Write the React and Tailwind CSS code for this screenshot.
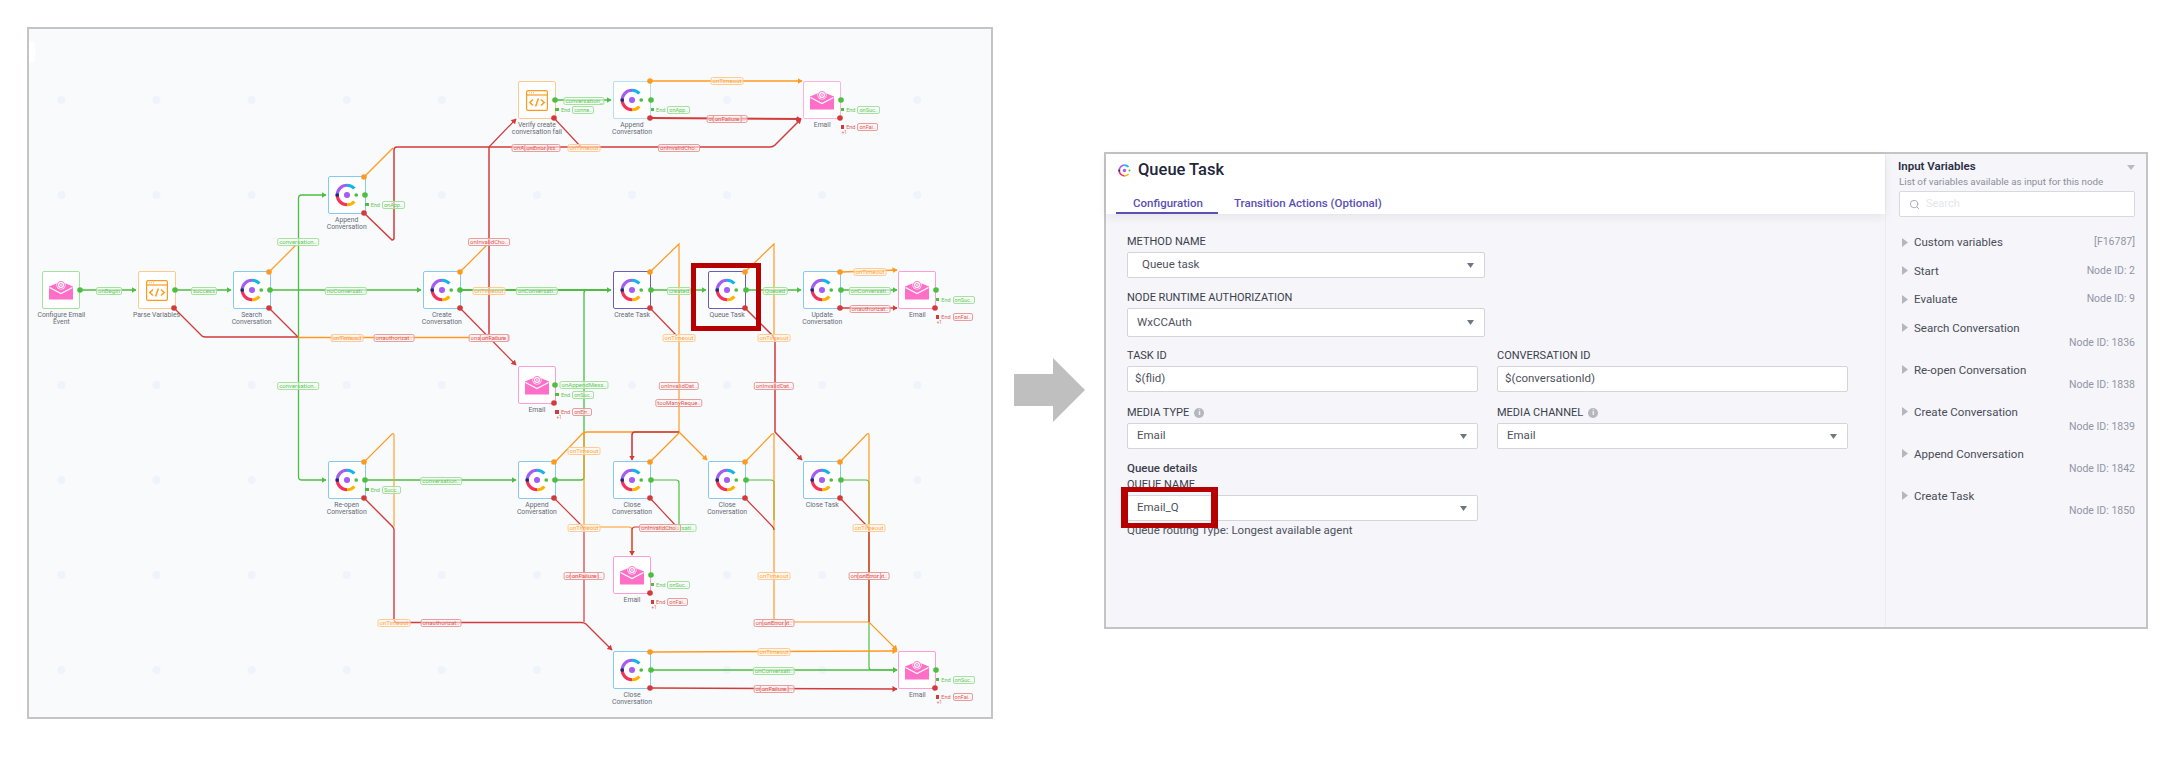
import React from "react";
import { Search } from "lucide-react";

const GREEN = "#4cbf40";
const ORANGE = "#ff9a1f";
const RED = "#d33b3b";

const colX = (k) => 42.4 + 95.1 * k;
const rowY = (j) => 81 + 95 * j;

const nodes = [
  { kind: "mail", k: 0, j: 2, border: "border-[#a3e39c]", label: ["Configure Email", "Event"] },
  { kind: "code", k: 1, j: 2, border: "border-[#ffc98f]", label: ["Parse Variables"] },
  { kind: "logo", k: 2, j: 2, border: "border-[#85c9f7]", label: ["Search", "Conversation"] },
  { kind: "logo", k: 3, j: 1, border: "border-[#85c9f7]", label: ["Append", "Conversation"] },
  { kind: "logo", k: 4, j: 2, border: "border-[#85c9f7]", label: ["Create", "Conversation"] },
  { kind: "code", k: 5, j: 0, border: "border-[#ffc98f]", label: ["Verify create", "conversation fail"] },
  { kind: "logo", k: 6, j: 0, border: "border-[#b5def9]", label: ["Append", "Conversation"] },
  { kind: "mail", k: 8, j: 0, border: "border-[#ffb3e0]", label: ["Email"] },
  { kind: "logo", k: 6, j: 2, border: "border-[#6a5fb8]", thick: true, label: ["Create Task"] },
  { kind: "logo", k: 7, j: 2, border: "border-[#6a5fb8]", thick: true, label: ["Queue Task"] },
  { kind: "logo", k: 8, j: 2, border: "border-[#85c9f7]", label: ["Update", "Conversation"] },
  { kind: "mail", k: 9, j: 2, border: "border-[#ff9dd8]", label: ["Email"] },
  { kind: "mail", k: 5, j: 3, border: "border-[#ff9dd8]", label: ["Email"] },
  { kind: "logo", k: 3, j: 4, border: "border-[#85c9f7]", label: ["Re-open", "Conversation"] },
  { kind: "logo", k: 5, j: 4, border: "border-[#85c9f7]", label: ["Append", "Conversation"] },
  { kind: "logo", k: 6, j: 4, border: "border-[#85c9f7]", label: ["Close", "Conversation"] },
  { kind: "logo", k: 7, j: 4, border: "border-[#85c9f7]", label: ["Close", "Conversation"] },
  { kind: "logo", k: 8, j: 4, border: "border-[#85c9f7]", label: ["Close Task"] },
  { kind: "mail", k: 6, j: 5, border: "border-[#ff9dd8]", label: ["Email"] },
  { kind: "logo", k: 6, j: 6, border: "border-[#85c9f7]", label: ["Close", "Conversation"] },
  { kind: "mail", k: 9, j: 6, border: "border-[#ff9dd8]", label: ["Email"] },
];

// [colour, stroke width, path, has arrow]
const edges = [
  [GREEN, 1.3, "M298.5 290 V198 Q298.5 195 302 195 H326", true],
  [GREEN, 1.3, "M298.5 290 V477 Q298.5 480 302 480 H326", true],
  [GREEN, 1.3, "M80 290 H136", true],
  [GREEN, 1.3, "M175 290 H231", true],
  [GREEN, 1.3, "M270 290 H421", true],
  [GREEN, 2, "M460 290 H611", true],
  [GREEN, 1.3, "M555 100 H611", true],
  [GREEN, 1.5, "M651 290 H706", true],
  [GREEN, 1.5, "M746 290 H801", true],
  [GREEN, 1.3, "M841 290 H897", true],
  [GREEN, 1.5, "M365 480 H516", true],
  [GREEN, 1.3, "M651 670 H897", true],
  [GREEN, 1.3, "M555 480 H581 Q584 480 584 477 V293 Q584 290 587 290", false],
  [GREEN, 1.2, "M651 480 H676 Q679 480 679 483 V527", false],
  [GREEN, 1.2, "M746 480 H771 Q774 480 774 483 V520", false],
  [GREEN, 1.2, "M841 480 H866 Q869 480 869 483 V667 Q869 670 872 670 H897", true],

  [ORANGE, 1.2, "M269 272 L296 245", false],
  [ORANGE, 1.2, "M460 272 L487 245", false],
  [ORANGE, 1.2, "M364 177 L393 148", false],
  [RED, 1.3, "M174 308 L202 336 Q203 337 206 337 H298", false],
  [RED, 1.3, "M269 308 L298 337", false],
  [ORANGE, 1.3, "M298 337.5 H470", false],
  [RED, 1.3, "M460 308 L516 365", true],
  [RED, 1.5, "M489 337 V147", false],
  [RED, 1.2, "M489 147 L516 119", true],
  [RED, 1.5, "M364 213 L392 240 Q394 240 394 238 V150 Q394 147 397 147 H770 Q773 147 775 145 L801 119", true],
  [RED, 1.2, "M554 118 L581 147", false],
  [ORANGE, 1.3, "M650 81 H802", true],
  [RED, 1.8, "M650 118 L801 119", true],
  [ORANGE, 1.3, "M841 272 L897 270", true],
  [RED, 1.3, "M841 308 H897", true],

  [ORANGE, 1.2, "M650 272 L679 244 V432", false],
  [RED, 1.2, "M650 308 L677 336", false],
  [ORANGE, 1.3, "M555 462 L582 434 Q584 432 587 432 H679 L707 460", true],
  [RED, 1.6, "M679 432 H635 Q632 432 632 435 V460", true],
  [ORANGE, 1.2, "M650 462 L679 433", false],
  [ORANGE, 1.2, "M584 432 V527 H629 Q632 527 632 530 V555", true],
  [RED, 1.2, "M650 498 L677 527 H635 Q632 527 632 530 V555", true],
  [RED, 1.2, "M554 498 L582 526 Q584 528 584 530 V622", false],
  [ORANGE, 1.2, "M745 272 L774 244 V336", false],
  [RED, 1.5, "M745 308 L772 335 Q775 338 775 341 V432 L802 460", true],
  [ORANGE, 1.2, "M745 462 L772 434 Q774 433 774 435 V620 Q774 622 778 622 H869 L897 650", true],
  [RED, 1.2, "M745 498 L772 526 Q774 528 774 530", false],
  [ORANGE, 1.2, "M840 462 L867 434 Q869 433 869 435 V622", false],
  [RED, 1.3, "M840 498 L867 526 Q869 528 869 530 V622", false],
  [ORANGE, 1.1, "M364 462 L392 434 Q394 433 394 435 V527", false],
  [RED, 1.4, "M364 498 L392 526 Q394 528 394 530 V619 Q394 622.5 397 622.5 H581 Q584 622.5 586 624 L612 650", true],
  [ORANGE, 1.4, "M650 652 L897 651", true],
  [RED, 1.4, "M650 688 L897 689", true],
];

const ports = [
  [80, 290, GREEN], [175, 290, GREEN], [174, 308, RED],
  [270, 290, GREEN], [269, 272, ORANGE], [269, 308, RED],
  [365, 195, GREEN], [364, 177, ORANGE], [364, 213, RED],
  [460, 290, GREEN], [460, 272, ORANGE], [460, 308, RED],
  [555, 100, GREEN], [554, 118, RED],
  [651, 100, GREEN], [650, 81, ORANGE], [650, 118, RED],
  [841, 100, GREEN], [840, 118, RED],
  [651, 290, GREEN], [650, 272, ORANGE], [650, 308, RED],
  [746, 290, GREEN], [745, 272, ORANGE], [745, 308, RED],
  [841, 290, GREEN], [840, 272, ORANGE], [840, 308, RED],
  [936, 290, GREEN], [935, 308, RED],
  [555, 385, GREEN], [554, 403, RED],
  [365, 480, GREEN], [364, 462, ORANGE], [364, 498, RED],
  [555, 480, GREEN], [554, 462, ORANGE], [554, 498, RED],
  [651, 480, GREEN], [650, 462, ORANGE], [650, 498, RED],
  [746, 480, GREEN], [745, 462, ORANGE], [745, 498, RED],
  [841, 480, GREEN], [840, 462, ORANGE], [840, 498, RED],
  [651, 575, GREEN], [650, 593, RED],
  [651, 670, GREEN], [650, 652, ORANGE], [650, 688, RED],
  [936, 670, GREEN], [935, 688, RED],
];

const pills = [
  ["g", "onBegin", 109, 291], ["g", "success", 204, 291], ["g", "noConversati..", 346, 291],
  ["g", "onConversati..", 537, 291], ["g", "created", 679, 291], ["g", "Queued", 775, 291],
  ["g", "conversation..", 298, 242], ["g", "conversation..", 298, 386], ["g", "conversation_", 584, 100.5],
  ["g", "conversation..", 441, 481], ["g", "onConversati..", 870, 291], ["g", "onAppendMess..", 584, 385],
  ["g", "conversati..", 679, 528], ["g", "onConversati..", 774, 671],
  ["o", "onTimeout", 489, 291], ["o", "onTimeout", 870, 272], ["o", "onTimeout", 584, 148],
  ["o", "onTimeout", 727, 81], ["o", "onTimeout", 679, 338], ["o", "onTimeout", 774, 338],
  ["o", "onTimeout", 584, 451], ["o", "onTimeout", 584, 528], ["o", "onTimeout", 774, 576],
  ["o", "onTimeout", 869, 528], ["o", "onTimeout", 774, 652], ["o", "onTimeout", 394, 623],
  ["r", "onFailure", 346, 338], ["o", "onTimeout", 347, 338], ["r", "onauthorizat..", 394, 338],
  ["r", "onauthorizat..", 489, 338], ["r", "onFailure", 494, 338],
  ["r", "onInvalidCho..", 489, 242], ["r", "onInvalidCho..", 679, 148],
  ["r", "onAppendMess..", 536, 148], ["r", "onError", 536, 148],
  ["r", "onauthorizat..", 727, 119], ["r", "onFailure", 727, 119],
  ["r", "onauthorizat..", 870, 309], ["r", "onInvalidCho..", 660, 528],
  ["r", "onauthorizat..", 584, 576], ["r", "onFailure", 584, 576],
  ["r", "onauthorizat..", 869, 576], ["r", "onError", 869, 576],
  ["r", "onauthorizat..", 774, 623], ["r", "onError", 774, 623],
  ["r", "onInvalidDat..", 679, 386], ["r", "tooManyReque..", 679, 403], ["r", "onInvalidDat..", 774, 386],
  ["r", "onauthorizat..", 441, 623], ["r", "onauthorizat..", 774, 689], ["r", "onFailure", 774, 689],
];

// end markers: [node left, node top, colour, pill text]
const ends = [
  [colX(3), rowY(1), "g", "onApp.."], [colX(5), rowY(0), "g", "conne.."], [colX(6), rowY(0), "g", "onApp.."],
  [colX(8), rowY(0), "g", "onSuc.."], [colX(8), rowY(0), "r", "onFai.."],
  [colX(9), rowY(2), "g", "onSuc.."], [colX(9), rowY(2), "r", "onFai.."],
  [colX(5), rowY(3), "g", "onSuc.."], [colX(5), rowY(3), "r", "onErr.."],
  [colX(3), rowY(4), "g", "Succ.."],
  [colX(6), rowY(5), "g", "onSuc.."], [colX(6), rowY(5), "r", "onFai.."],
  [colX(9), rowY(6), "g", "onSuc.."], [colX(9), rowY(6), "r", "onFai.."],
];

const pillStyles = {
  g: "border-[#a5e29f] text-[#62c857] bg-[#f4fcf3]/60",
  o: "border-[#ffcb95] text-[#ffa640] bg-[#fff6ec]/60",
  r: "border-[#e99d9d] text-[#dc5a5a] bg-[#fdf1f1]/60",
};

const inputVars = [
  { name: "Custom variables", id: "[F16787]" },
  { name: "Start", id: "Node ID: 2" },
  { name: "Evaluate", id: "Node ID: 9" },
  { name: "Search Conversation", id: "Node ID: 1836", wrap: true },
  { name: "Re-open Conversation", id: "Node ID: 1838", wrap: true },
  { name: "Create Conversation", id: "Node ID: 1839", wrap: true },
  { name: "Append Conversation", id: "Node ID: 1842", wrap: true },
  { name: "Create Task", id: "Node ID: 1850", wrap: true },
];

const LogoIcon = ({ size = 24 }) => (
  <svg width={size} height={size} viewBox="0 0 26 26" fill="none" strokeWidth="3.4">
    <path d="M13 2.4 A10.6 10.6 0 0 0 2.4 13" stroke="#a35df5" />
    <path d="M13 2.4 A10.6 10.6 0 0 1 21 6" stroke="#12b5e5" />
    <path d="M2.4 13 A10.6 10.6 0 0 0 13 23.6" stroke="#f5325c" />
    <path d="M13 23.6 A10.6 10.6 0 0 0 21 20" stroke="#ffb300" />
    <circle cx="2.4" cy="13" r="2" fill="#12326e" stroke="none" />
    <circle cx="13" cy="13" r="3.3" fill="#a35df5" stroke="none" />
    <circle cx="23" cy="13" r="2" fill="#4cbf40" stroke="none" />
  </svg>
);

const MailIcon = () => (
  <svg width="24" height="20" viewBox="0 0 24 20">
    <path d="M0 6.5 L12 1.5 L24 6.5 V19 Q24 19.5 23.5 19.5 H.5 Q0 19.5 0 19 Z" fill="#ff6ec7" />
    <path d="M0.5 7.5 L12 13.5 L23.5 7.5" fill="none" stroke="#fff" strokeWidth="1.2" />
    <circle cx="12" cy="5" r="4.6" fill="#fff" />
    <circle cx="12" cy="5" r="3.6" fill="none" stroke="#ff6ec7" strokeWidth=".9" />
    <circle cx="12" cy="5" r="1.4" fill="none" stroke="#ff6ec7" strokeWidth=".9" />
  </svg>
);

const CodeIcon = () => (
  <svg width="22" height="21" viewBox="0 0 22 21" fill="none" stroke="#ff9a1f">
    <rect x=".6" y=".6" width="20.8" height="19.8" rx="1.4" strokeWidth="1.2" />
    <path d="M.6 5 H21.4" strokeWidth="1.2" />
    <path d="M3 2.8 H3.8 M5 2.8 H5.8 M7 2.8 H7.8" strokeWidth="1" />
    <path d="M7 9.5 L3.8 12.5 L7 15.5 M15 9.5 L18.2 12.5 L15 15.5 M12.4 8.6 L9.6 16.4" strokeWidth="1.5" />
  </svg>
);

const Pill = ({ tone, text, x, y }) => (
  <span
    className={`absolute -translate-x-1/2 -translate-y-1/2 rounded-[2px] border-[0.7px] px-[1px] text-[6px] leading-[6px] whitespace-nowrap ${pillStyles[tone]}`}
    style={{ left: x - 29, top: y - 29 }}
  >
    {text}
  </span>
);

const EndMark = ({ left, top, tone, text }) => {
  const green = tone === "g";
  const y = green ? top + 24.5 : top + 42;
  return (
    <div className="absolute flex items-center gap-[2px]" style={{ left: left + 37.5 - 29, top: y - 29 }}>
      <span className={`h-[3.5px] w-[3.5px] ${green ? "bg-[#4cbf40]" : "bg-[#d33b3b]"}`} />
      <span className={`text-[5.5px] leading-[6px] ${green ? "text-[#62c857]" : "text-[#dc5a5a]"}`}>End</span>
      <span className={`rounded-[2px] border-[0.7px] px-[1px] text-[5.5px] leading-[6px] whitespace-nowrap ${pillStyles[tone]}`}>{text}</span>
      {!green && <span className="absolute left-[1px] top-[7px] text-[4.5px] leading-[5px] text-[#dc5a5a]">+1</span>}
    </div>
  );
};

const FlowNode = ({ node }) => {
  const left = colX(node.k);
  const top = rowY(node.j);
  return (
    <div className="absolute w-[38px]" style={{ left: left - 29, top: top - 29 }}>
      <div
        className={`flex h-[38px] w-[38px] items-center justify-center rounded-[2px] bg-white ${node.border} ${node.thick ? "border-[1.5px]" : "border"}`}
      >
        {node.kind === "logo" && <LogoIcon />}
        {node.kind === "mail" && <MailIcon />}
        {node.kind === "code" && <CodeIcon />}
      </div>
      <div className="absolute left-1/2 top-[41px] -translate-x-1/2 text-center text-[6.8px] leading-[7.3px] whitespace-nowrap text-[#666b75]">
        {node.label.map((line) => (
          <div key={line}>{line}</div>
        ))}
      </div>
    </div>
  );
};

const FlowCanvas = () => {
  const dots = [];
  for (let k = 0; k < 10; k++) {
    for (let j = 0; j < 7; j++) dots.push([colX(k) + 19, 100 + 95 * j]);
  }

  return (
    <div className="relative h-[692px] w-[966px] shrink-0 overflow-hidden border-2 border-[#c4c4c4] bg-[#f9fafc]">
      <div className="absolute left-0 top-[13px] h-[20px] w-[6px] rounded-r-[2px] bg-white" />
      <svg className="absolute left-0 top-0" width="962" height="688" viewBox="29 29 962 688" fill="none">
        <defs>
          {[["g", GREEN], ["o", ORANGE], ["r", RED]].map(([id, color]) => (
            <marker key={id} id={`arrow-${id}`} markerUnits="userSpaceOnUse" markerWidth="6" markerHeight="6" refX="4.5" refY="3" orient="auto">
              <path d="M0 0 L5 3 L0 6 Z" fill={color} />
            </marker>
          ))}
        </defs>
        {dots.map(([x, y]) => (
          <circle key={`${x}-${y}`} cx={x} cy={y} r="4" fill="#eef3fc" />
        ))}
        {edges.map(([color, width, d, arrow], i) => (
          <path
            key={i}
            d={d}
            stroke={color}
            strokeWidth={width}
            markerEnd={arrow ? `url(#arrow-${color === GREEN ? "g" : color === ORANGE ? "o" : "r"})` : undefined}
          />
        ))}
      </svg>
      {nodes.map((node) => (
        <FlowNode key={`${node.k}-${node.j}`} node={node} />
      ))}
      <svg className="absolute left-0 top-0" width="962" height="688" viewBox="29 29 962 688">
        {ports.map(([x, y, color]) => (
          <circle key={`${x}-${y}`} cx={x} cy={y} r="2.8" fill={color} />
        ))}
      </svg>
      {pills.map(([tone, text, x, y], i) => (
        <Pill key={i} tone={tone} text={text} x={x} y={y} />
      ))}
      {ends.map(([left, top, tone, text], i) => (
        <EndMark key={i} left={left} top={top} tone={tone} text={text} />
      ))}
      {/* highlight around the Queue Task node */}
      <div className="absolute left-[662px] top-[234px] h-[68px] w-[70px] border-[5px] border-[#b70000]" />
    </div>
  );
};

const Caret = () => (
  <svg width="7" height="5" viewBox="0 0 7 5" className="shrink-0">
    <path d="M0 0 H7 L3.5 5 Z" fill="#70757f" />
  </svg>
);

const FieldLabel = ({ children, info }) => (
  <div className="flex h-[14px] items-center gap-[5px] text-[11px] leading-[14px] text-[#3b3f4a]">
    <span>{children}</span>
    {info && (
      <span className="flex h-[10px] w-[10px] items-center justify-center rounded-full bg-[#b5b7bd] text-[7px] font-bold text-white">i</span>
    )}
  </div>
);

const Field = ({ label, info, value, caret, className = "", height = "h-[26px]", textClass = "" }) => (
  <div className={className}>
    <FieldLabel info={info}>{label}</FieldLabel>
    <div
      className={`mt-[3px] flex items-center justify-between rounded-[2px] border border-[#d4d5da] bg-white pr-[10px] text-[11.5px] text-[#4d525c] ${height} ${textClass}`}
    >
      <span>{value}</span>
      {caret && <Caret />}
    </div>
  </div>
);

const QueueTaskPanel = () => (
  <div className="ml-[18px] mt-[125px] flex h-[477px] w-[1044px] shrink-0 border-2 border-[#c4c4c4] bg-[#f5f5fa]">
    <div className="w-[780px] border-r border-[#ecedf2]">
      <div className="h-[60px] bg-white pl-[10px] pt-[7px] shadow-[0_3px_10px_rgba(0,0,0,0.07)]">
        <div className="flex h-[18px] items-center">
          <span className="ml-[2px] flex"><LogoIcon size={13} /></span>
          <span className="ml-[7px] text-[16.5px] font-medium text-[#22263a]">Queue Task</span>
        </div>
        <div className="mt-[17px] flex h-[18px] text-[11.5px] font-medium text-[#5a4fb5]">
          <div className="h-[18px] w-[102px] border-b-2 border-[#5a4fb5] pl-[17px] leading-[14px]">Configuration</div>
          <div className="ml-[16px] leading-[14px]">Transition Actions (Optional)</div>
        </div>
      </div>
      <div className="pl-[21px] pt-[21px]">
        <Field label="METHOD NAME" value="Queue task" caret className="w-[358px]" textClass="pl-[14px]" />
        <Field label="NODE RUNTIME AUTHORIZATION" value="WxCCAuth" caret className="mt-[13px] w-[358px]" height="h-[29px]" textClass="pl-[9px]" />
        <div className="mt-[12px] flex gap-[19px]">
          <Field label="TASK ID" value="$(flid)" className="w-[351px]" textClass="pl-[7px]" />
          <Field label="CONVERSATION ID" value="$(conversationId)" className="w-[351px]" textClass="pl-[7px]" />
        </div>
        <div className="mt-[14px] flex gap-[19px]">
          <Field label="MEDIA TYPE" info value="Email" caret className="w-[351px]" textClass="pl-[9px]" />
          <Field label="MEDIA CHANNEL" info value="Email" caret className="w-[351px]" textClass="pl-[9px]" />
        </div>
        <div className="mt-[12px] h-[14px] text-[11.5px] font-medium leading-[14px] text-[#3b3f4a]">Queue details</div>
        <Field label="QUEUE NAME" value="Email_Q" caret className="mt-[3px] w-[351px]" textClass="pl-[9px]" />
        <div className="mt-[2px] text-[11.5px] leading-[14px] text-[#4d525c]">Queue routing Type: Longest available agent</div>
      </div>
    </div>
    <div className="flex-1 pl-[12px] pr-[11px] pt-[6px]">
      <div className="flex h-[14px] items-center justify-between text-[11.5px] font-semibold text-[#2b2f45]">
        <span>Input Variables</span>
        <svg width="8" height="5" viewBox="0 0 8 5"><path d="M0 0 H8 L4 5 Z" fill="#b9bbc3" /></svg>
      </div>
      <div className="ml-[1px] mt-[1px] h-[13px] whitespace-nowrap text-[9.8px] leading-[13px] text-[#8b8f9e]">List of variables available as input for this node</div>
      <div className="ml-[1px] mt-[3px] flex h-[26px] items-center rounded-[2px] border border-[#d8d9de] bg-white pl-[9px] text-[11px] text-[#e6e7ea]">
        <Search size={11} color="#9a9ca4" strokeWidth={1.8} />
        <span className="ml-[6px]">Search</span>
      </div>
      <div className="ml-[4px] mt-[18px]">
        {inputVars.map((row) => (
          <div key={row.name} className={`relative ${row.wrap ? "mb-[11px] h-[31px]" : "h-[28.5px]"}`}>
            <div className="flex items-center text-[11.5px] leading-[14px] text-[#4a4d57]">
              <svg width="6" height="9" viewBox="0 0 6 9" className="mr-[6px]"><path d="M0 0 L6 4.5 L0 9 Z" fill="#b5b7bd" /></svg>
              {row.name}
            </div>
            <div className={`absolute right-0 text-[10.5px] leading-[13px] text-[#9295a5] ${row.wrap ? "top-[15px]" : "top-0"}`}>{row.id}</div>
          </div>
        ))}
      </div>
    </div>
    {/* highlight around the queue name value */}
    <div className="absolute left-[1121px] top-[487px] h-[41px] w-[97px] border-x-[7px] border-y-[5px] border-[#b70000]" />
  </div>
);

export default function App() {
  return (
    <div className="relative flex h-[760px] w-[2174px] overflow-hidden bg-white pl-[27px] pt-[27px] font-['Roboto',sans-serif]">
      <FlowCanvas />
      <svg className="ml-[21px] mt-[331px] shrink-0" width="72" height="65" viewBox="0 0 72 65">
        <path d="M0 16 H39 V0 L71 32 L39 64 V48 H0 Z" fill="#bfbfbf" />
      </svg>
      <QueueTaskPanel />
    </div>
  );
}
